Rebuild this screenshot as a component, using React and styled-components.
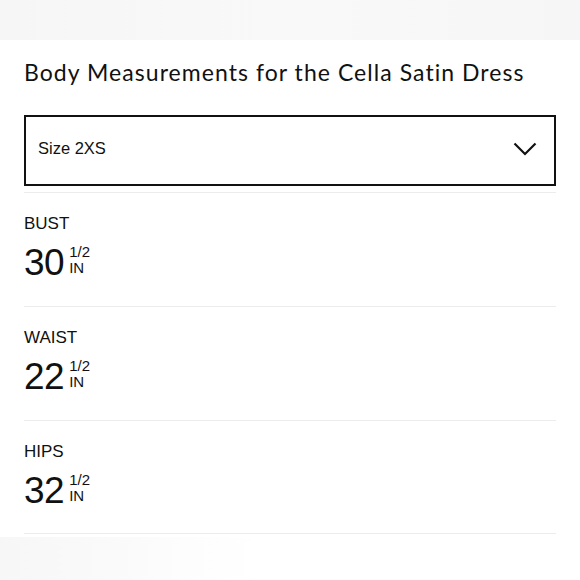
import React from "react";
import styled, { createGlobalStyle } from "styled-components";

const Global = createGlobalStyle`
  html, body { margin: 0; padding: 0; background: #fff; }
  body { font-family: "Liberation Sans", Arial, sans-serif; color: #111; }
`;

const Page = styled.div`
  width: 580px;
  height: 580px;
  display: flex;
  flex-direction: column;
  overflow: hidden;
`;

const TopBand = styled.div`
  height: 40px;
  flex: none;
  background: linear-gradient(90deg, #f6f6f6, #f9f9f9 50%, #f6f6f6);
`;

const Panel = styled.div`
  padding: 0 24px;
  flex: none;
`;

const Title = styled.h2`
  margin: 0;
  padding-top: 17px;
  height: 58px;
  font-family: "Lato", sans-serif;
  font-weight: 400;
  font-size: 23px;
  line-height: 30px;
  letter-spacing: 1.05px;
  color: #111;
  white-space: nowrap;
`;

const Select = styled.div`
  height: 67px;
  border: 2px solid #111;
  display: flex;
  align-items: center;
  justify-content: space-between;
  padding: 0 17px 0 12px;
`;

const SelectText = styled.span`
  font-family: "Liberation Sans", Arial, sans-serif;
  font-size: 16.5px;
  color: #111;
  position: relative;
  top: -2px;
`;

const ChevronBox = styled.span`
  display: flex;
  margin-top: -3px;
`;

const List = styled.div`
  margin-top: 6px;
`;

const Row = styled.div`
  border-top: 1px solid #ececec;
  height: 114px;
  padding-top: 21px;
  box-sizing: border-box;
  &:last-child { border-bottom: 1px solid #ececec; }
`;

const Label = styled.div`
  font-size: 17px;
  line-height: 20px;
  color: #111;
`;

const Value = styled.div`
  display: flex;
  align-items: flex-start;
  margin-top: 9px;
`;

const Big = styled.span`
  font-size: 37px;
  line-height: 40px;
  letter-spacing: -0.5px;
  color: #111;
`;

const Frac = styled.span`
  display: flex;
  flex-direction: column;
  margin-left: 5px;
  margin-top: 1px;
  font-size: 15px;
  line-height: 16px;
  color: #111;
`;

const BottomBand = styled.div`
  flex: 1;
  margin-top: 3px;
  background: linear-gradient(90deg, #f7f7f7, #fafafa 20%, #fdfdfd 32%, #fff 45%);
`;

const Chevron = () => (
  <svg width="24" height="14" viewBox="0 0 24 14" fill="none">
    <polyline points="1.5,1.5 12,12 22.5,1.5" stroke="#111" strokeWidth="2.2" strokeLinejoin="miter" />
  </svg>
);

const rows = [
  { label: "BUST", value: "30" },
  { label: "WAIST", value: "22" },
  { label: "HIPS", value: "32" },
];

export default function App() {
  return (
    <Page>
      <Global />
      <TopBand />
      <Panel>
        <Title>Body Measurements for the Cella Satin Dress</Title>
        <Select>
          <SelectText>Size 2XS</SelectText>
          <ChevronBox>
            <Chevron />
          </ChevronBox>
        </Select>
        <List>
          {rows.map((r) => (
            <Row key={r.label}>
              <Label>{r.label}</Label>
              <Value>
                <Big>{r.value}</Big>
                <Frac>
                  <span>1/2</span>
                  <span>IN</span>
                </Frac>
              </Value>
            </Row>
          ))}
        </List>
      </Panel>
      <BottomBand />
    </Page>
  );
}
